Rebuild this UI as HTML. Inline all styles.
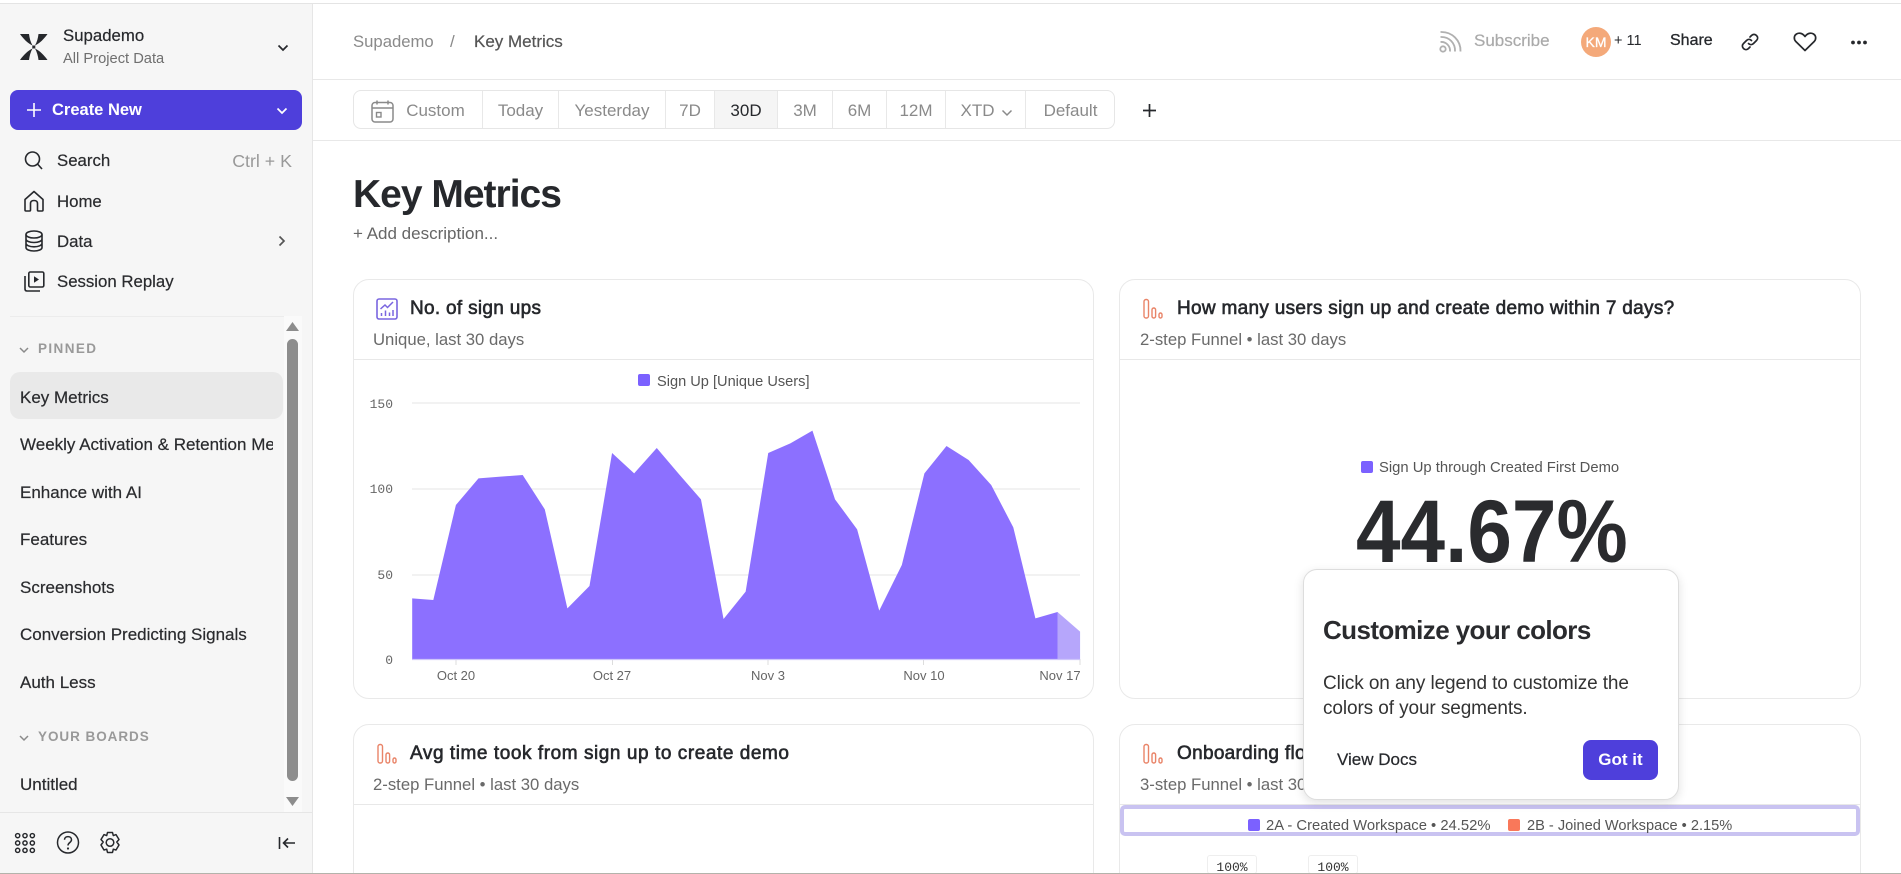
<!DOCTYPE html>
<html><head><meta charset="utf-8"><title>Key Metrics</title>
<style>
*{box-sizing:border-box}
html,body{margin:0;padding:0;width:1901px;height:874px;overflow:hidden;background:#fff;font-family:"Liberation Sans",sans-serif;color:#26282c}
#r{position:relative;width:1901px;height:874px;overflow:hidden;background:#fff}
.a{position:absolute;white-space:nowrap;line-height:20px;height:20px}
.abs{position:absolute}
svg{position:absolute;overflow:visible}
.nav{font-size:16.8px;left:57px;color:#2a2b2e;-webkit-text-stroke:.2px #2a2b2e}
.it{font-size:17px;left:20px;color:#2a2b2e;-webkit-text-stroke:.2px #2a2b2e;width:253px;overflow:hidden}
.sec{font-size:13.5px;font-weight:bold;left:38px;color:#999}
.seg{position:absolute;top:0;height:37px;line-height:39px;text-align:center;font-size:17px;color:#8a8a8a;border-right:1px solid #e8e8e8}
.card{position:absolute;background:#fff;border:1px solid #e9e9e9;border-radius:16px}
.ct{font-size:19px;letter-spacing:.3px;color:#26282c;-webkit-text-stroke:.6px #26282c}
.cs{font-size:16.7px;color:#6a6a6a}
.sw{position:absolute;width:12px;height:12px;border-radius:2px}
.lg{font-size:14.6px;color:#555}
.yl{font-size:13px;color:#666;width:40px;text-align:right;left:353px;font-family:"Liberation Mono",monospace}
.xl{font-size:13px;color:#666;width:70px;text-align:center}
</style></head><body><div id="r">

<!-- top line -->
<div class="abs" style="left:0;top:3px;width:1901px;height:1px;background:#e4e4e4"></div>

<!-- sidebar -->
<div class="abs" style="left:0;top:4px;width:313px;height:869px;background:#f6f6f6;border-right:1px solid #e6e6e6"></div>

<svg style="left:20px;top:33px" width="28" height="28" viewBox="0 0 28 28"><g fill="#26282c"><path d="M0 1H9C9.500 5 10.500 9 12.500 12.500C7.500 10 3.500 6 0 1Z"/><path d="M27.500 1H18.500C18 5 17 9 15 12.500C20 10 24 6 27.500 1Z"/><path d="M0 27H9C9.500 23 10.500 19 12.500 15.500C7.500 18 3.500 22 0 27Z"/><path d="M27.500 27H18.500C18 23 17 19 15 15.500C20 18 24 22 27.500 27Z"/><rect x="12.300" y="12.500" width="3" height="3"/></g></svg>
<div class="a" style="left:63px;top:26px;font-size:16.8px;-webkit-text-stroke:.2px #2a2b2e">Supademo</div>
<div class="a" style="left:63px;top:49px;font-size:14.7px;color:#6f6f6f">All Project Data</div>
<svg style="left:277px;top:44px" width="12" height="8"><path d="M1.500 1.500L6 6L10.500 1.500" fill="none" stroke="#26282c" stroke-width="1.700"/></svg>

<div class="abs" style="left:10px;top:90px;width:292px;height:40px;background:#4e3fdb;border-radius:8px"></div>
<svg style="left:26px;top:102px" width="16" height="16"><path d="M8 1V15M1 8H15" stroke="#fff" stroke-width="1.600"/></svg>
<div class="a" style="left:52px;top:100px;font-size:16.500px;font-weight:bold;color:#fff">Create New</div>
<svg style="left:276px;top:107px" width="12" height="8"><path d="M1.500 1.500L6 6L10.500 1.500" fill="none" stroke="#fff" stroke-width="1.700"/></svg>

<svg style="left:24px;top:151px" width="20" height="20" viewBox="0 0 20 20"><circle cx="8.500" cy="8" r="7" fill="none" stroke="#26282c" stroke-width="1.600"/><path d="M13.500 13L18 18" stroke="#26282c" stroke-width="1.600"/></svg>
<div class="a nav" style="top:151px">Search</div>
<div class="a" style="right:1609px;top:151px;font-size:17.800px;color:#999">Ctrl + K</div>

<svg style="left:24px;top:190px" width="20" height="22" viewBox="0 0 20 22"><path d="M1 20V9.500L10 1.500L19 9.500V20Q19 21 18 21H14.500Q13.500 21 13.500 20V13.500Q13.500 10.500 10 10.500Q6.500 10.500 6.500 13.500V20Q6.500 21 5.500 21H2Q1 21 1 20Z" fill="none" stroke="#26282c" stroke-width="1.600" stroke-linejoin="round"/></svg>
<div class="a nav" style="top:192px">Home</div>

<svg style="left:24px;top:230px" width="20" height="22" viewBox="0 0 20 22"><ellipse cx="10" cy="4.500" rx="8" ry="3.500" fill="none" stroke="#26282c" stroke-width="1.600"/><path d="M2 4.500V17.500C2 19.500 5.500 21 10 21S18 19.500 18 17.500V4.500M2 9C2 11 5.500 12.500 10 12.500S18 11 18 9M2 13.300C2 15.300 5.500 16.800 10 16.800S18 15.300 18 13.300" fill="none" stroke="#26282c" stroke-width="1.600"/></svg>
<div class="a nav" style="top:232px">Data</div>
<svg style="left:278px;top:235px" width="8" height="12"><path d="M1.500 1.500L6 6L1.500 10.500" fill="none" stroke="#555" stroke-width="1.700"/></svg>

<svg style="left:24px;top:271px" width="21" height="21" viewBox="0 0 21 21"><rect x="4.800" y="1" width="15" height="15" rx="1.500" fill="none" stroke="#26282c" stroke-width="1.600"/><path d="M1 5V18Q1 20 3 20H16" fill="none" stroke="#26282c" stroke-width="1.600"/><path d="M10 5.300L15 8.500L10 11.700Z" fill="#26282c"/></svg>
<div class="a nav" style="top:272px">Session Replay</div>

<div class="abs" style="left:10px;top:316px;width:275px;height:1px;background:#ececec"></div>
<!-- scrollbar -->
<div class="abs" style="left:284px;top:316px;width:18px;height:496px;background:#fafafa"></div>
<svg style="left:286px;top:322px" width="13" height="9"><path d="M6.500 0L13 9H0Z" fill="#8d8d8d"/></svg>
<div class="abs" style="left:287px;top:339px;width:11px;height:442px;background:#8d8d8d;border-radius:6px"></div>
<svg style="left:286px;top:797px" width="13" height="9"><path d="M0 0H13L6.500 9Z" fill="#8d8d8d"/></svg>

<svg style="left:19px;top:347px" width="10" height="7"><path d="M1 1L5 5L9 1" fill="none" stroke="#8a8a8a" stroke-width="1.500"/></svg>
<div class="a sec" style="top:339px;letter-spacing:1.400px">PINNED</div>
<div class="abs" style="left:10px;top:372px;width:273px;height:47px;background:#e9e9e9;border-radius:10px"></div>
<div class="a it" style="top:388px">Key Metrics</div>
<div class="a it" style="top:435px">Weekly Activation &amp; Retention Metrics</div>
<div class="a it" style="top:483px">Enhance with AI</div>
<div class="a it" style="top:530px">Features</div>
<div class="a it" style="top:578px">Screenshots</div>
<div class="a it" style="top:625px">Conversion Predicting Signals</div>
<div class="a it" style="top:673px">Auth Less</div>
<svg style="left:19px;top:735px" width="10" height="7"><path d="M1 1L5 5L9 1" fill="none" stroke="#8a8a8a" stroke-width="1.500"/></svg>
<div class="a sec" style="top:727px;letter-spacing:.95px">YOUR BOARDS</div>
<div class="a it" style="top:775px">Untitled</div>

<div class="abs" style="left:0;top:812px;width:312px;height:1px;background:#e6e6e6"></div>
<svg style="left:14px;top:832px" width="22" height="22" viewBox="0 0 24 24"><g fill="none" stroke="#26282c" stroke-width="1.600"><circle cx="4" cy="4" r="2.300"/><circle cx="12" cy="4" r="2.300"/><circle cx="20" cy="4" r="2.300"/><circle cx="4" cy="12" r="2.300"/><circle cx="12" cy="12" r="2.300"/><circle cx="20" cy="12" r="2.300"/><circle cx="4" cy="20" r="2.300"/><circle cx="12" cy="20" r="2.300"/><circle cx="20" cy="20" r="2.300"/></g></svg>
<svg style="left:56px;top:831px" width="24" height="24" viewBox="0 0 24 24"><circle cx="12" cy="11.500" r="10.500" fill="none" stroke="#26282c" stroke-width="1.500"/><path d="M8.500 8.800C8.500 4.500 15.500 4.500 15.500 8.800C15.500 11.500 12 11.500 12 14.500" fill="none" stroke="#26282c" stroke-width="1.500"/><circle cx="12" cy="17.500" r="1.100" fill="#26282c"/></svg>
<svg style="left:98px;top:831px" width="24" height="24" viewBox="0 0 24 24"><path d="M9.500 1.500H14.500L15.300 4.600L18 3.600L21 8.500L18.800 11L21 14L18 19L15.300 18.200L14.500 21.500H9.500L8.700 18.200L6 19L3 14L5.200 11L3 8.500L6 3.600L8.700 4.600Z" fill="none" stroke="#26282c" stroke-width="1.500" stroke-linejoin="round"/><circle cx="12" cy="11.500" r="3.800" fill="none" stroke="#26282c" stroke-width="1.500"/></svg>
<svg style="left:278px;top:836px" width="18" height="14" viewBox="0 0 18 14"><path d="M1.500 1V13M17 7H5.500M10 2.500L5.500 7L10 11.500" fill="none" stroke="#26282c" stroke-width="1.600"/></svg>

<!-- header -->
<div class="a" style="left:353px;top:32px;font-size:16.700px;color:#8a8a8a">Supademo</div>
<div class="a" style="left:450px;top:32px;font-size:17px;color:#8a8a8a">/</div>
<div class="a" style="left:474px;top:32px;font-size:17px;color:#555;-webkit-text-stroke:.2px #555">Key Metrics</div>

<svg style="left:1439px;top:30px" width="23" height="23" viewBox="0 0 23 23"><g fill="none" stroke="#b0b0b0" stroke-width="1.800"><circle cx="4" cy="19" r="2.700"/><path d="M1.500 12C7 11.500 11.500 16 11 21.500"/><path d="M1.500 7C10 6.500 16.500 13 16 21.500"/><path d="M1.500 2C13 1.500 22 10.500 21.500 21.500"/></g></svg>
<div class="a" style="left:1474px;top:31px;font-size:17px;color:#aaa;-webkit-text-stroke:.2px #aaa">Subscribe</div>
<div class="abs" style="left:1581px;top:27px;width:30px;height:30px;border-radius:50%;background:#f4a97a;color:#fff;font-size:14px;line-height:30px;text-align:center;-webkit-text-stroke:.3px #fff">KM</div>
<div class="a" style="left:1614px;top:31px;font-size:14.500px;color:#26282c">+ 11</div>
<div class="a" style="left:1670px;top:31px;font-size:16px;color:#26282c;-webkit-text-stroke:.3px #26282c">Share</div>
<svg style="left:1741px;top:33px" width="18" height="18" viewBox="0 0 18 18"><path d="M7.500 10.500C9 12 11 12 12.500 10.500L15.500 7.500C17 6 17 4 15.500 2.500C14 1 12 1 10.500 2.500L9 4" fill="none" stroke="#26282c" stroke-width="1.700" stroke-linecap="round"/><path d="M10.500 7.500C9 6 7 6 5.500 7.500L2.500 10.500C1 12 1 14 2.500 15.500C4 17 6 17 7.500 15.500L9 14" fill="none" stroke="#26282c" stroke-width="1.700" stroke-linecap="round"/></svg>
<svg style="left:1793px;top:32px" width="24" height="20" viewBox="0 0 24 20"><path d="M12 18.500L2.800 9.500C0.500 7 1 3.500 3.500 2C6 0.500 9.500 1 12 4.500C14.500 1 18 0.500 20.500 2C23 3.500 23.500 7 21.200 9.500Z" fill="none" stroke="#26282c" stroke-width="1.700" stroke-linejoin="round"/></svg>
<svg style="left:1851px;top:40px" width="16" height="5"><circle cx="2" cy="2.500" r="1.900" fill="#26282c"/><circle cx="8" cy="2.500" r="1.900" fill="#26282c"/><circle cx="14" cy="2.500" r="1.900" fill="#26282c"/></svg>

<div class="abs" style="left:313px;top:79px;width:1588px;height:1px;background:#e8e8e8"></div>
<div class="abs" style="left:313px;top:140px;width:1588px;height:1px;background:#e8e8e8"></div>

<!-- toolbar -->
<div class="abs" style="left:353px;top:90px;width:762px;height:39px;border:1px solid #e6e6e6;border-radius:8px;overflow:hidden;background:#fff">
  <div class="seg" style="left:0;width:129px;padding-left:35px">Custom</div>
  <div class="seg" style="left:129px;width:76px">Today</div>
  <div class="seg" style="left:205px;width:107px">Yesterday</div>
  <div class="seg" style="left:312px;width:49px">7D</div>
  <div class="seg" style="left:361px;width:63px;background:#f5f5f5;color:#26282c">30D</div>
  <div class="seg" style="left:424px;width:55px">3M</div>
  <div class="seg" style="left:479px;width:54px">6M</div>
  <div class="seg" style="left:533px;width:59px">12M</div>
  <div class="seg" style="left:592px;width:80px;padding-right:16px">XTD</div>
  <div class="seg" style="left:672px;width:89px;border-right:0">Default</div>
</div>
<svg style="left:371px;top:100px" width="23" height="23" viewBox="0 0 23 23"><rect x="1" y="2.500" width="21" height="19.500" rx="3" fill="none" stroke="#8a8a8a" stroke-width="1.500"/><path d="M1 8H22M6 0.500V4.500M17 0.500V4.500" stroke="#8a8a8a" stroke-width="1.500"/><rect x="5.500" y="12.500" width="4.500" height="4.500" fill="none" stroke="#8a8a8a" stroke-width="1.400"/></svg>
<svg style="left:1001px;top:109px" width="12" height="8"><path d="M1.500 1.500L6 6L10.500 1.500" fill="none" stroke="#8a8a8a" stroke-width="1.500"/></svg>
<svg style="left:1142px;top:103px" width="15" height="15"><path d="M7.500 1V14M1 7.500H14" stroke="#26282c" stroke-width="1.700"/></svg>

<!-- title -->
<div class="a" style="left:353px;top:170px;height:50px;line-height:50px;font-size:39px;letter-spacing:-1px;font-weight:bold;color:#26282c">Key Metrics</div>
<div class="a" style="left:353px;top:224px;font-size:17px;color:#666">+ Add description...</div>

<!-- card 1 -->
<div class="card" style="left:353px;top:279px;width:741px;height:420px"></div>
<div class="abs" style="left:354px;top:359px;width:739px;height:1px;background:#e8e8e8"></div>
<svg style="left:376px;top:298px" width="22" height="22" viewBox="0 0 22 22"><rect x="1" y="1" width="20" height="20" rx="2" fill="none" stroke="#7a66e0" stroke-width="1.600"/><path d="M4.500 11L9 7L11.500 9.500L17 4" fill="none" stroke="#7a66e0" stroke-width="1.500"/><path d="M5.500 18V15M9.500 18V12.500M13.500 18V14.500M17 18V12" stroke="#7a66e0" stroke-width="1.500"/></svg>
<div class="a ct" style="left:410px;top:299px">No. of sign ups</div>
<div class="a cs" style="left:373px;top:330px">Unique, last 30 days</div>

<div class="sw" style="left:638px;top:374px;background:#7b61ff"></div>
<div class="a lg" style="left:657px;top:372px">Sign Up [Unique Users]</div>

<div class="a yl" style="top:395px">150</div>
<div class="a yl" style="top:480px">100</div>
<div class="a yl" style="top:566px">50</div>
<div class="a yl" style="top:651px">0</div>

<svg style="left:0;top:0" width="1901" height="874">
  <g stroke="#eeeeee" stroke-width="1.500"><path d="M412 403H1080M412 489H1080M412 575H1080"/></g>
  <g stroke="#dddddd" stroke-width="1"><path d="M456 659V665M612.500 659V665M768 659V665M923.500 659V665M1080 659V665"/></g>
  <g transform="translate(340 270) scale(.4911 .33333)">
    <polygon fill="#8c70ff" points="147,985 190,990 236,705 282,625 327,620 372,615 417,718 463,1015 508,948 554,549 599,610 645,534 690,612 735,688 781,1047 826,965 872,549 917,520 962,482 1008,688 1053,778 1098,1022 1144,885 1190,610 1235,528 1280,570 1326,645 1371,772 1416,1045 1461,1026 1461,1168 147,1168"/>
    <polygon fill="#b6a6fb" points="1461,1026 1507,1085 1507,1168 1461,1168"/>
  </g>
  <path d="M412 659.500H1080" stroke="#cfc6fb" stroke-width="1.200"/>
</svg>

<div class="a xl" style="left:421px;top:666px">Oct 20</div>
<div class="a xl" style="left:577px;top:666px">Oct 27</div>
<div class="a xl" style="left:733px;top:666px">Nov 3</div>
<div class="a xl" style="left:889px;top:666px">Nov 10</div>
<div class="a xl" style="left:1025px;top:666px">Nov 17</div>

<!-- card 2 -->
<div class="card" style="left:1119px;top:279px;width:742px;height:420px"></div>
<div class="abs" style="left:1120px;top:359px;width:740px;height:1px;background:#e8e8e8"></div>
<svg style="left:1142px;top:298px" width="22" height="22" viewBox="0 0 22 22"><g fill="none" stroke="#e98468" stroke-width="1.400"><rect x="2" y="1.500" width="4.500" height="18.500" rx="2"/><rect x="10" y="10" width="3.600" height="10" rx="1.800"/><rect x="17" y="15" width="3" height="5" rx="1.500"/></g></svg>
<div class="a ct" style="left:1177px;top:299px">How many users sign up and create demo within 7 days?</div>
<div class="a cs" style="left:1140px;top:330px">2-step Funnel • last 30 days</div>
<div class="sw" style="left:1361px;top:461px;background:#7b61ff"></div>
<div class="a lg" style="left:1379px;top:458px;font-size:14.800px">Sign Up through Created First Demo</div>
<div class="a" style="left:1356px;top:481px;height:100px;line-height:100px;font-size:89px;font-weight:bold;color:#2a2b2e;transform:scaleX(.9);transform-origin:0 0">44.67%</div>

<!-- card 3 -->
<div class="card" style="left:353px;top:724px;width:741px;height:180px"></div>
<div class="abs" style="left:354px;top:804px;width:739px;height:1px;background:#e8e8e8"></div>
<svg style="left:376px;top:743px" width="22" height="22" viewBox="0 0 22 22"><g fill="none" stroke="#e98468" stroke-width="1.400"><rect x="2" y="1.500" width="4.500" height="18.500" rx="2"/><rect x="10" y="10" width="3.600" height="10" rx="1.800"/><rect x="17" y="15" width="3" height="5" rx="1.500"/></g></svg>
<div class="a ct" style="left:410px;top:744px;letter-spacing:.56px">Avg time took from sign up to create demo</div>
<div class="a cs" style="left:373px;top:775px">2-step Funnel • last 30 days</div>

<!-- card 4 -->
<div class="card" style="left:1119px;top:724px;width:742px;height:180px"></div>
<div class="abs" style="left:1120px;top:804px;width:740px;height:1px;background:#e8e8e8"></div>
<svg style="left:1142px;top:743px" width="22" height="22" viewBox="0 0 22 22"><g fill="none" stroke="#e98468" stroke-width="1.400"><rect x="2" y="1.500" width="4.500" height="18.500" rx="2"/><rect x="10" y="10" width="3.600" height="10" rx="1.800"/><rect x="17" y="15" width="3" height="5" rx="1.500"/></g></svg>
<div class="a ct" style="left:1177px;top:744px">Onboarding flow</div>
<div class="a cs" style="left:1140px;top:775px">3-step Funnel • last 30 days</div>

<div class="abs" style="left:1120px;top:805px;width:740px;height:31px;border:4px solid #c9c3f1;border-radius:5px"></div>
<div class="sw" style="left:1248px;top:819px;background:#7b61ff"></div>
<div class="a lg" style="left:1266px;top:816px;font-size:14.800px">2A - Created Workspace • 24.52%</div>
<div class="sw" style="left:1508px;top:819px;background:#f9785a"></div>
<div class="a lg" style="left:1527px;top:816px">2B - Joined Workspace • 2.15%</div>

<div class="abs" style="left:1207px;top:855px;width:50px;height:19px;border:1px solid #eee;border-radius:3px;font:13px/24px 'Liberation Mono',monospace;text-align:center;color:#333">100%</div>
<div class="abs" style="left:1308px;top:855px;width:50px;height:19px;border:1px solid #eee;border-radius:3px;font:13px/24px 'Liberation Mono',monospace;text-align:center;color:#333">100%</div>

<!-- popup -->
<div class="abs" style="left:1303px;top:569px;width:376px;height:231px;background:#fff;border:1px solid #ddd;border-radius:14px;box-shadow:0 3px 10px rgba(0,0,0,.12)"></div>
<div class="a" style="left:1323px;top:615px;height:30px;line-height:30px;font-size:26px;font-weight:bold;letter-spacing:-.6px;color:#2a2b2e">Customize your colors</div>
<div class="a" style="left:1323px;top:673px;height:22px;line-height:22px;font-size:19px;letter-spacing:-.1px;color:#333">Click on any legend to customize the</div>
<div class="a" style="left:1323px;top:698px;height:22px;line-height:22px;font-size:19px;letter-spacing:-.1px;color:#333">colors of your segments.</div>
<div class="a" style="left:1337px;top:750px;font-size:17px;color:#26282c;-webkit-text-stroke:.2px #26282c">View Docs</div>
<div class="abs" style="left:1583px;top:740px;width:75px;height:40px;background:#4e3fdb;border-radius:8px;color:#fff;font-size:17px;font-weight:bold;line-height:40px;text-align:center">Got it</div>

<div class="abs" style="left:0;top:873px;width:1901px;height:1px;background:#b3b3ab"></div>
</div></body></html>
